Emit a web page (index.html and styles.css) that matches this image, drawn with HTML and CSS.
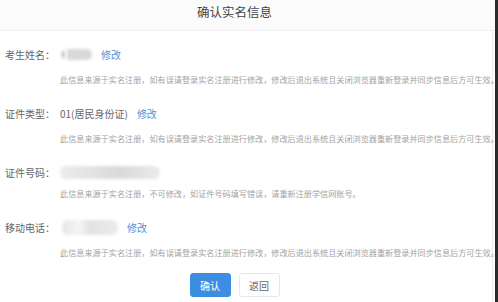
FILE: index.html
```html
<!DOCTYPE html>
<html lang="zh-CN">
<head>
    <meta charset="UTF-8">
    <meta name="viewport" content="width=device-width, initial-scale=1.0">
    <title>确认实名信息</title>
    <link rel="stylesheet" href="styles.css">
</head>
<body>
    <div class="page">
        <header class="top">
            <h1>确认实名信息</h1>
        </header>

        <div class="panel">
            <div class="field first">
                <div class="row">
                    <span class="label">考生姓名：</span>
                    <span class="mask mask-name"></span>
                    <a class="edit">修改</a>
                </div>
                <p class="note">此信息来源于实名注册，如有误请登录实名注册进行修改，修改后退出系统且关闭浏览器重新登录并同步信息后方可生效。</p>
            </div>

            <div class="field">
                <div class="row">
                    <span class="label">证件类型：</span>
                    <span class="value">01(居民身份证)</span>
                    <a class="edit">修改</a>
                </div>
                <p class="note">此信息来源于实名注册，如有误请登录实名注册进行修改，修改后退出系统且关闭浏览器重新登录并同步信息后方可生效。</p>
            </div>

            <div class="field">
                <div class="row">
                    <span class="label">证件号码：</span>
                    <span class="mask mask-id"></span>
                </div>
                <p class="note tight">此信息来源于实名注册，不可修改，如证件号码填写错误，请重新注册学信网账号。</p>
            </div>

            <div class="field">
                <div class="row">
                    <span class="label">移动电话：</span>
                    <span class="mask mask-phone"></span>
                    <a class="edit">修改</a>
                </div>
                <p class="note">此信息来源于实名注册，如有误请登录实名注册进行修改，修改后退出系统且关闭浏览器重新登录并同步信息后方可生效。</p>
            </div>

            <div class="actions">
                <button class="btn btn-primary">确认</button>
                <button class="btn">返回</button>
            </div>
        </div>
    </div>
</body>
</html>
```

FILE: styles.css
```css
* {
    margin: 0;
    padding: 0;
    box-sizing: border-box;
}

html, body {
    height: 100%;
}

body {
    font-family: "Noto Sans CJK SC", "Noto Sans", sans-serif;
    background-color: #fff;
    color: #666;
    overflow: hidden;
}

.page {
    height: 100%;
    border-right: 3px solid #2b2b2b;
    display: flex;
    flex-direction: column;
}

.top {
    height: 31px;
    padding-right: 26px;
    background-color: #fbfbfb;
    border-bottom: 1px solid #f0f0f0;
    text-align: center;
}

.top h1 {
    font-size: 12.5px;
    font-weight: normal;
    line-height: 24px;
    color: #444;
}

.panel {
    flex: 1;
    border-right: 1px solid #ececec;
    margin-right: 2px;
    padding-top: 13px;
}

.field {
    margin-bottom: 17px;
}

.row {
    display: flex;
    align-items: center;
    height: 20px;
    font-size: 10px;
}

.label {
    width: 60px;
    padding-left: 5px;
    color: #666;
}

.value {
    color: #666;
}

.edit {
    margin-left: 9px;
    color: #4f93d6;
    cursor: pointer;
}

.mask {
    display: inline-block;
    filter: blur(1.5px);
    border-radius: 6px;
}

.mask-name {
    width: 30px;
    height: 11px;
    margin-left: 2px;
    background: linear-gradient(90deg, #999 0 2px, #fff 2px 5px, #d9d9d9 5px);
}

.mask-id {
    width: 100px;
    height: 13px;
    background: linear-gradient(90deg, #ececec, #e0e0e0 40%, #d9d9d9 60%, #ebebeb);
}

.mask-phone {
    width: 56px;
    height: 15px;
    margin-left: 2px;
    background: linear-gradient(90deg, #e6e6e6, #f5f5f5 30%, #e2e2e2 50%, #ececec);
}

.note {
    margin-top: 10px;
    margin-left: 60px;
    font-size: 8.15px;
    line-height: 12px;
    color: #a3a3a3;
    white-space: nowrap;
}

.note.tight {
    margin-top: 6px;
}

.actions {
    display: flex;
    justify-content: center;
    gap: 8px;
    margin-top: -3px;
    padding-right: 23px;
}

.btn {
    width: 41px;
    height: 24px;
    font-family: inherit;
    font-size: 10px;
    color: #666;
    background-color: #fff;
    border: 1px solid #e8e8e8;
    border-radius: 3px;
    cursor: pointer;
}

.btn-primary {
    color: #fff;
    background-color: #3d8ee0;
    border-color: #3d8ee0;
}
```
